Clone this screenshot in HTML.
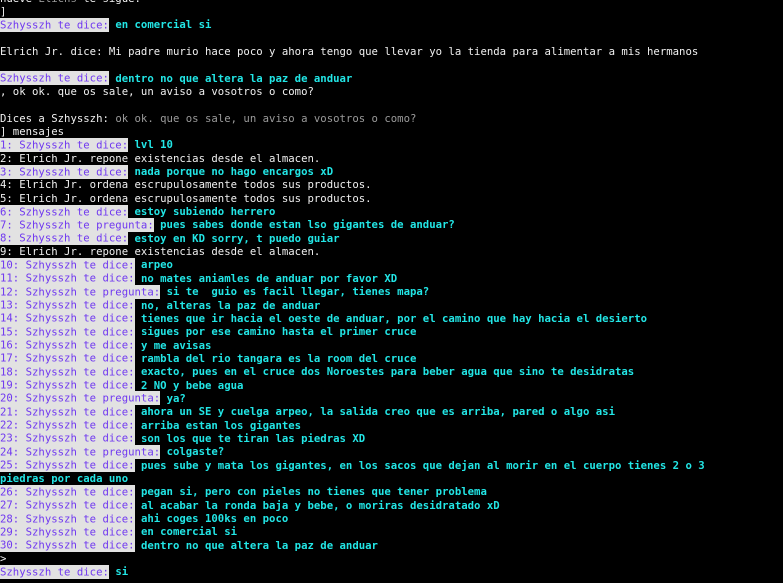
<!DOCTYPE html>
<html><head><meta charset="utf-8"><style>
html,body{margin:0;padding:0;background:#000;width:783px;height:583px;overflow:hidden}
#t{position:absolute;left:0;top:-8.4px;font-family:"DejaVu Sans Mono","Liberation Mono",monospace;font-size:10.65px;line-height:13.34px;color:#f0f0f0;white-space:pre}
.l{background:#e2e2e2;color:#7038f0;padding:0.5px 0}
.c{color:#22e6e6;font-weight:bold}
.g{color:#9a9a9a}
</style></head><body><div id="t">nueve <span class="g">Elichs</span> te sigue.
]
<span class="l">Szhysszh te dice:</span> <span class="c">en comercial si</span>

Elrich Jr. dice: Mi padre murio hace poco y ahora tengo que llevar yo la tienda para alimentar a mis hermanos

<span class="l">Szhysszh te dice:</span> <span class="c">dentro no que altera la paz de anduar</span>
, ok ok. que os sale, un aviso a vosotros o como?

Dices a Szhysszh: <span class="g">ok ok. que os sale, un aviso a vosotros o como?</span>
] mensajes
<span class="l">1: Szhysszh te dice:</span> <span class="c">lvl 10</span>
2: Elrich Jr. repone existencias desde el almacen.
<span class="l">3: Szhysszh te dice:</span> <span class="c">nada porque no hago encargos xD</span>
4: Elrich Jr. ordena escrupulosamente todos sus productos.
5: Elrich Jr. ordena escrupulosamente todos sus productos.
<span class="l">6: Szhysszh te dice:</span> <span class="c">estoy subiendo herrero</span>
<span class="l">7: Szhysszh te pregunta:</span> <span class="c">pues sabes donde estan lso gigantes de anduar?</span>
<span class="l">8: Szhysszh te dice:</span> <span class="c">estoy en KD sorry, t puedo guiar</span>
9: Elrich Jr. repone existencias desde el almacen.
<span class="l">10: Szhysszh te dice:</span> <span class="c">arpeo</span>
<span class="l">11: Szhysszh te dice:</span> <span class="c">no mates aniamles de anduar por favor XD</span>
<span class="l">12: Szhysszh te pregunta:</span> <span class="c">si te  guio es facil llegar, tienes mapa?</span>
<span class="l">13: Szhysszh te dice:</span> <span class="c">no, alteras la paz de anduar</span>
<span class="l">14: Szhysszh te dice:</span> <span class="c">tienes que ir hacia el oeste de anduar, por el camino que hay hacia el desierto</span>
<span class="l">15: Szhysszh te dice:</span> <span class="c">sigues por ese camino hasta el primer cruce</span>
<span class="l">16: Szhysszh te dice:</span> <span class="c">y me avisas</span>
<span class="l">17: Szhysszh te dice:</span> <span class="c">rambla del rio tangara es la room del cruce</span>
<span class="l">18: Szhysszh te dice:</span> <span class="c">exacto, pues en el cruce dos Noroestes para beber agua que sino te desidratas</span>
<span class="l">19: Szhysszh te dice:</span> <span class="c">2 NO y bebe agua</span>
<span class="l">20: Szhysszh te pregunta:</span> <span class="c">ya?</span>
<span class="l">21: Szhysszh te dice:</span> <span class="c">ahora un SE y cuelga arpeo, la salida creo que es arriba, pared o algo asi</span>
<span class="l">22: Szhysszh te dice:</span> <span class="c">arriba estan los gigantes</span>
<span class="l">23: Szhysszh te dice:</span> <span class="c">son los que te tiran las piedras XD</span>
<span class="l">24: Szhysszh te pregunta:</span> <span class="c">colgaste?</span>
<span class="l">25: Szhysszh te dice:</span> <span class="c">pues sube y mata los gigantes, en los sacos que dejan al morir en el cuerpo tienes 2 o 3</span>
<span class="c">piedras por cada uno</span>
<span class="l">26: Szhysszh te dice:</span> <span class="c">pegan si, pero con pieles no tienes que tener problema</span>
<span class="l">27: Szhysszh te dice:</span> <span class="c">al acabar la ronda baja y bebe, o moriras desidratado xD</span>
<span class="l">28: Szhysszh te dice:</span> <span class="c">ahi coges 100ks en poco</span>
<span class="l">29: Szhysszh te dice:</span> <span class="c">en comercial si</span>
<span class="l">30: Szhysszh te dice:</span> <span class="c">dentro no que altera la paz de anduar</span>
&gt;
<span class="l">Szhysszh te dice:</span> <span class="c">si</span>
</div></body></html>
